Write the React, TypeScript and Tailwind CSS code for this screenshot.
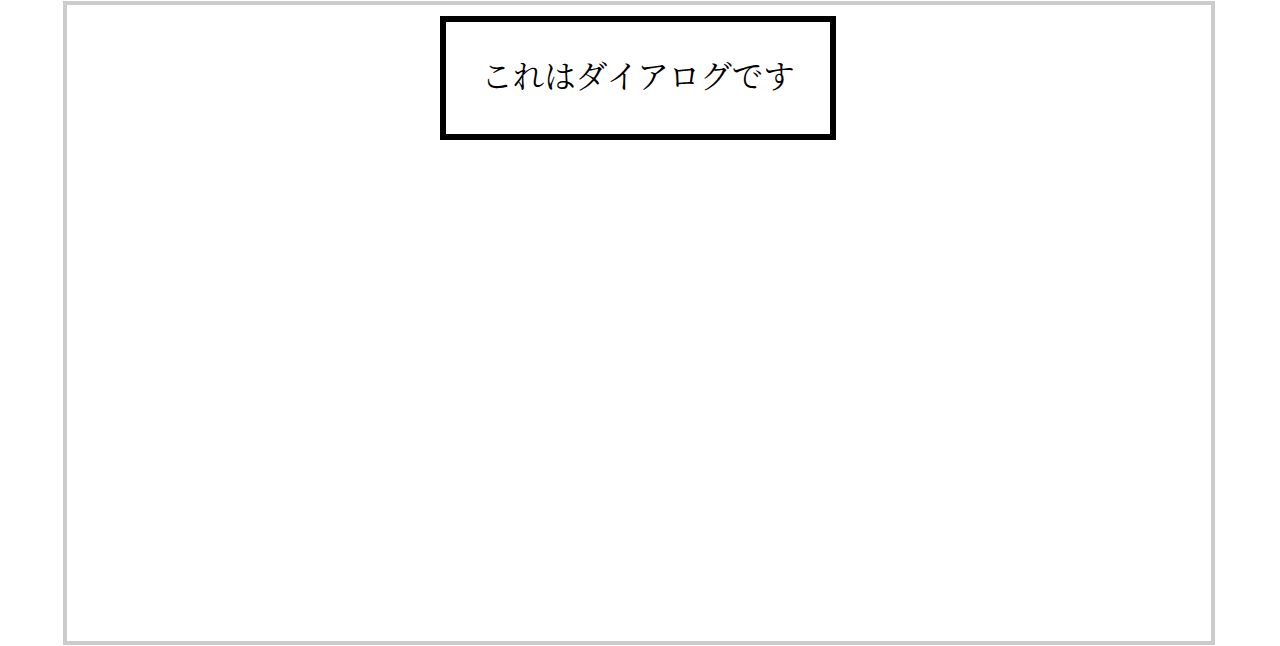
export default function App() {
  return (
    <div className="h-[646px] overflow-hidden bg-white">
      <div className="ml-[63px] mt-px h-[644px] w-[1152px] border-4 border-[#cccccc] pt-[11px]">
        <div className="ml-[373px] flex h-[124px] w-[396px] items-center justify-center border-[6px] border-black pb-[6px]">
          <p className="font-['Noto_Serif_CJK_JP','Noto_Serif_JP',serif] text-[31.5px] text-black">
            これはダイアログです
          </p>
        </div>
      </div>
    </div>
  );
}
